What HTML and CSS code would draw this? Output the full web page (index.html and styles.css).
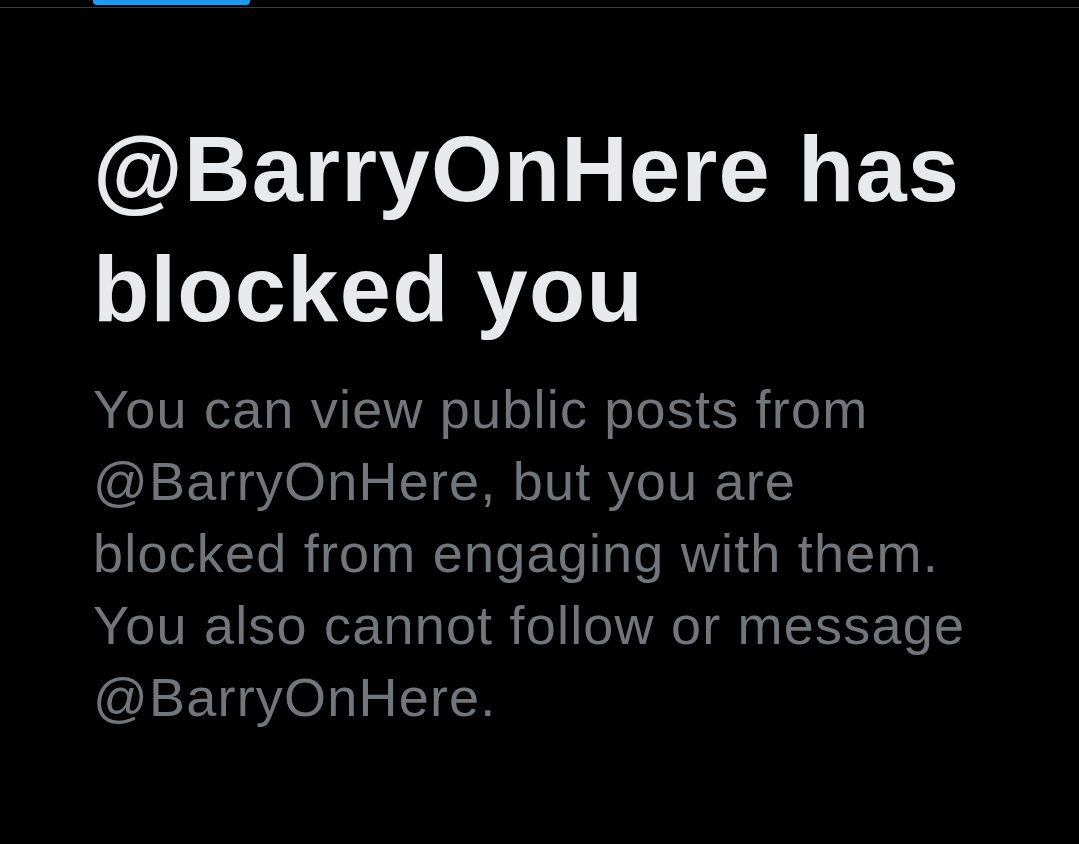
FILE: index.html
```html
<!DOCTYPE html>
<html>
<head>
<meta charset="utf-8">
<link rel="stylesheet" href="styles.css">
</head>
<body>
<div class="tabs">
  <div class="tab"><span class="indicator"></span></div>
</div>
<main class="blocked">
  <h1 class="title">@BarryOnHere has blocked you</h1>
  <p class="desc">You can view public posts from @BarryOnHere, but you are blocked from engaging with them. You also cannot follow or message @BarryOnHere.</p>
</main>
</body>
</html>
```
FILE: styles.css
```css
html, body {
  margin: 0;
  padding: 0;
  background: #000;
  height: 100%;
}
body {
  font-family: "Liberation Sans", Arial, sans-serif;
}
.tabs {
  height: 7px;
  border-bottom: 1px solid #3a3d40;
  padding-left: 93px;
}
.tab {
  width: 157px;
  height: 5px;
}
.indicator {
  display: block;
  width: 100%;
  height: 5px;
  background: #1d9bf0;
  border-radius: 0 0 4px 4px;
}
.blocked {
  padding: 101px 80px 0 93px;
}
.title {
  margin: 0;
  font-size: 92px;
  line-height: 120px;
  font-weight: 700;
  color: #e7e9ea;
  letter-spacing: 1.3px;
  max-width: 900px;
}
.desc {
  margin: 24px 0 0;
  font-size: 54px;
  line-height: 72px;
  color: #71767b;
  letter-spacing: 1.2px;
  max-width: 880px;
}
```
